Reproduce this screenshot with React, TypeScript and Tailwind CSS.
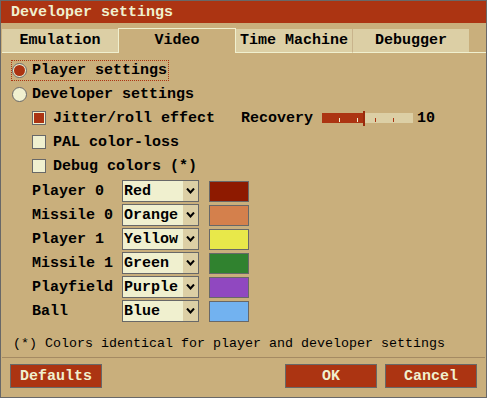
import React from "react";

const colorRows = [
  { label: "Player 0", value: "Red", swatch: "bg-[#8e1a00]" },
  { label: "Missile 0", value: "Orange", swatch: "bg-[#d4804c]" },
  { label: "Player 1", value: "Yellow", swatch: "bg-[#e8e84a]" },
  { label: "Missile 1", value: "Green", swatch: "bg-[#30822f]" },
  { label: "Playfield", value: "Purple", swatch: "bg-[#9048c0]" },
  { label: "Ball", value: "Blue", swatch: "bg-[#72b2f0]" },
];

function Radio({ checked }: { checked?: boolean }) {
  return (
    <span className="flex h-[15px] w-[15px] items-center justify-center rounded-full border border-[#686868] bg-[#f0f0cf]">
      {checked && <span className="h-[11px] w-[11px] rounded-full bg-[#ac3412]" />}
    </span>
  );
}

function Checkbox({ checked }: { checked?: boolean }) {
  return (
    <span className="flex h-[14px] w-[14px] items-center justify-center border border-[#686868] bg-[#f0f0cf]">
      {checked && <span className="h-[10px] w-[10px] bg-[#ac3412]" />}
    </span>
  );
}

function Select({ value }: { value: string }) {
  return (
    <div className="flex h-[22px] w-[77px] border border-[#686868] bg-[#f0f0cf]">
      <span className="flex flex-1 items-center pl-[1px] leading-none">{value}</span>
      <span className="flex w-[15px] items-center justify-center bg-[#dccfa5]">
        <svg width="9" height="6" viewBox="0 0 9 6">
          <path d="M1 0.5 L4.5 4.5 L8 0.5" fill="none" stroke="#000" strokeWidth="2" />
        </svg>
      </span>
    </div>
  );
}

function Slider() {
  return (
    <div className="relative flex h-[15px] w-[91px] items-center">
      <div className="flex h-[10px] w-full">
        <div className="relative w-[41px] bg-[#ac3412]">
          <span className="absolute bottom-[1px] left-[17px] h-[4px] w-px bg-[#f0f0cf]" />
          <span className="absolute bottom-[1px] left-[35px] h-[4px] w-px bg-[#f0f0cf]" />
        </div>
        <div className="relative flex-1 bg-[#dccfa5]">
          <span className="absolute bottom-[1px] left-[12px] h-[4px] w-px bg-[#ac3412]" />
          <span className="absolute bottom-[1px] left-[30px] h-[4px] w-px bg-[#ac3412]" />
        </div>
      </div>
      <span className="absolute left-[41px] top-0 h-[15px] w-[2px] bg-[#9a2a0c]" />
    </div>
  );
}

export default function App() {
  return (
    <div className="flex h-[398px] w-[487px] flex-col border border-[#686868] bg-[#c9af7c] font-['Liberation_Mono',monospace] text-[15px] font-bold text-black">
      {/* Title */}
      <div className="flex h-[22px] items-center bg-[#ac3412] pl-[10px] leading-none text-[#f0f0cf]">
        Developer settings
      </div>

      {/* Tabs */}
      <div className="mt-[5px] flex h-[25px] items-stretch pl-px leading-none">
        <div className="mt-px flex w-[116px] items-center justify-center border-b border-[#f0f0cf] bg-[#dccfa5]">
          Emulation
        </div>
        <div className="flex w-[118px] items-center justify-center border-x border-t border-[#f0f0cf] pb-[2px]">
          Video
        </div>
        <div className="mt-px flex w-[116px] items-center justify-center border-b border-[#f0f0cf] bg-[#dccfa5]">
          Time Machine
        </div>
        <div className="mt-px flex w-[117px] items-center justify-center border-b border-l border-[#f0f0cf] border-l-[#c9b48c] bg-[#dccfa5]">
          Debugger
        </div>
        <div className="flex-1 border-b border-[#f0f0cf]" />
      </div>

      {/* Content */}
      <div className="flex flex-col pt-[5px] leading-none">
        <div className="flex h-[24px] items-center pl-[10px]">
          <div className="flex h-[21px] w-[158px] items-center gap-[5px] border border-dotted border-[#ac3412]">
            <Radio checked />
            <span>Player settings</span>
          </div>
        </div>
        <div className="flex h-[24px] items-center gap-[5px] pl-[11px]">
          <Radio />
          <span>Developer settings</span>
        </div>
        <div className="flex h-[24px] items-center pl-[31px]">
          <Checkbox checked />
          <span className="ml-[7px] w-[188px]">Jitter/roll effect</span>
          <span className="w-[81px]">Recovery</span>
          <Slider />
          <span className="ml-[4px]">10</span>
        </div>
        <div className="flex h-[24px] items-center gap-[7px] pl-[31px]">
          <Checkbox />
          <span>PAL color-loss</span>
        </div>
        <div className="flex h-[24px] items-center gap-[7px] pl-[31px]">
          <Checkbox />
          <span>Debug colors (*)</span>
        </div>
        <div className="mt-px flex flex-col">
          {colorRows.map((r) => (
            <div key={r.label} className="flex h-[24px] items-center pl-[31px]">
              <span className="w-[90px]">{r.label}</span>
              <Select value={r.value} />
              <span className={`ml-[10px] h-[21px] w-[40px] border border-[#686868] ${r.swatch}`} />
            </div>
          ))}
        </div>
      </div>

      {/* Footnote */}
      <div className="flex h-[34px] items-center pl-[12px] pt-[7px] text-[13.33px] font-normal leading-none">
        (*) Colors identical for player and developer settings
      </div>
      <div className="mx-px h-px bg-[#a48a62]" />

      {/* Buttons */}
      <div className="mt-[6px] flex px-[9px] leading-none text-[#f0f0cf]">
        <button className="flex h-[24px] w-[92px] items-center justify-center border border-[#686868] bg-[#ac3412]">
          Defaults
        </button>
        <div className="flex-1" />
        <button className="flex h-[24px] w-[92px] items-center justify-center border border-[#686868] bg-[#ac3412]">
          OK
        </button>
        <button className="ml-[8px] flex h-[24px] w-[92px] items-center justify-center border border-[#686868] bg-[#ac3412]">
          Cancel
        </button>
      </div>
    </div>
  );
}
